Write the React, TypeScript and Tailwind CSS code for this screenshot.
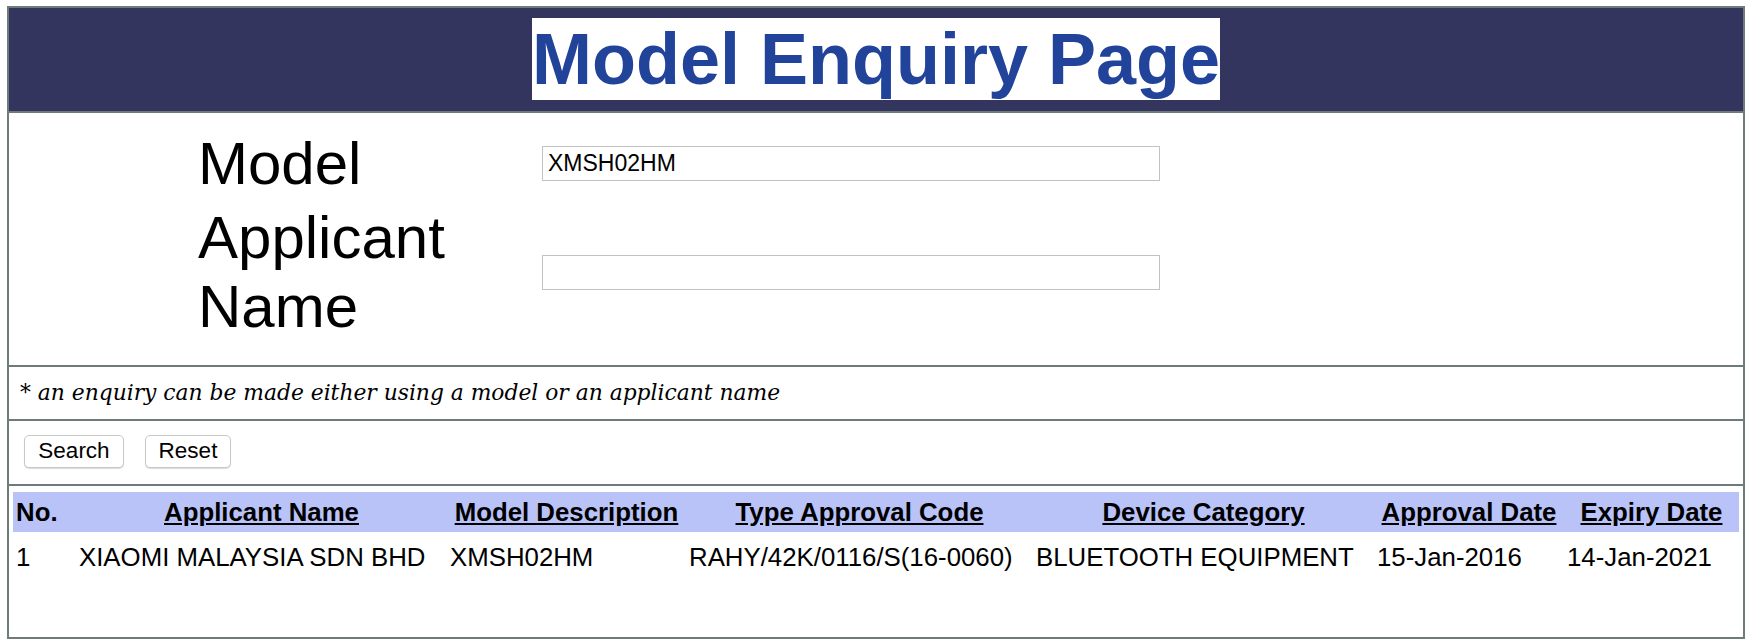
import React from "react";

const cols = [63, 371, 239, 347, 341, 190, 175];
const headers = [
  "No.",
  "Applicant Name",
  "Model Description",
  "Type Approval Code",
  "Device Category",
  "Approval Date",
  "Expiry Date",
];
const row = [
  "1",
  "XIAOMI MALAYSIA SDN BHD",
  "XMSH02HM",
  "RAHY/42K/0116/S(16-0060)",
  "BLUETOOTH EQUIPMENT",
  "15-Jan-2016",
  "14-Jan-2021",
];

export default function App() {
  return (
    <div className="w-[1751px] h-[641px] bg-white overflow-hidden font-['Liberation_Sans',Arial,sans-serif] text-black">
      <div className="ml-[7px] mt-[6px] w-[1738px] border-2 border-[#6e7b7b]">
        {/* Header */}
        <div className="h-[105px] bg-[#33355f] border-b-2 border-[#6e7b7b] flex justify-center pt-[10px]">
          <span className="inline-block h-[82px] bg-white text-[72px] leading-[82px] font-bold text-[#22439a] whitespace-nowrap">
            Model Enquiry Page
          </span>
        </div>

        {/* Form */}
        <div className="h-[254px] border-b-2 border-[#6e7b7b] pt-[16px] pl-[189px] flex flex-col gap-[5px]">
          <div className="flex items-center">
            <div className="w-[344px] text-[60px] leading-[69px]">Model</div>
            <div className="w-[618px] h-[35px] border border-[#c3c3c3] flex items-center pl-[5px] text-[23px]">
              XMSH02HM
            </div>
          </div>
          <div className="flex items-center">
            <div className="w-[344px] text-[60px] leading-[69px]">Applicant Name</div>
            <div className="w-[618px] h-[35px] border border-[#c3c3c3]" />
          </div>
        </div>

        {/* Note */}
        <div className="h-[54px] border-b-2 border-[#6e7b7b] flex items-center pl-[11px]">
          <span className="font-['DejaVu_Serif',Georgia,serif] italic text-[21.8px]">
            * an enquiry can be made either using a model or an applicant name
          </span>
        </div>

        {/* Buttons */}
        <div className="h-[65px] border-b-2 border-[#6e7b7b] flex items-start pt-[14px] pl-[15px] gap-[21px]">
          <button className="w-[100px] h-[33px] bg-white border border-[#c8c8c8] rounded-[5px] shadow-[0_1px_1px_rgba(0,0,0,0.15)] text-[22.5px] leading-none">
            Search
          </button>
          <button className="w-[86px] h-[33px] bg-white border border-[#c8c8c8] rounded-[5px] shadow-[0_1px_1px_rgba(0,0,0,0.15)] text-[22.5px] leading-none">
            Reset
          </button>
        </div>

        {/* Table */}
        <div className="h-[151px] pt-[6px] px-[4px]">
          <table className="w-[1726px] table-fixed border-collapse text-[25.8px]">
            <colgroup>
              {cols.map((w, i) => (
                <col key={i} style={{ width: w }} />
              ))}
            </colgroup>
            <thead>
              <tr className="bg-[#b9c3f8]">
                {headers.map((h, i) => (
                  <th
                    key={i}
                    className={`px-[3px] py-[5px] leading-[30px] font-bold whitespace-nowrap ${
                      i === 0 ? "text-left" : "text-center underline"
                    }`}
                  >
                    {h}
                  </th>
                ))}
              </tr>
            </thead>
            <tbody>
              <tr>
                {row.map((c, i) => (
                  <td key={i} className="px-[3px] pt-[10px] leading-[30px] text-left whitespace-nowrap">
                    {c}
                  </td>
                ))}
              </tr>
            </tbody>
          </table>
        </div>
      </div>
    </div>
  );
}
